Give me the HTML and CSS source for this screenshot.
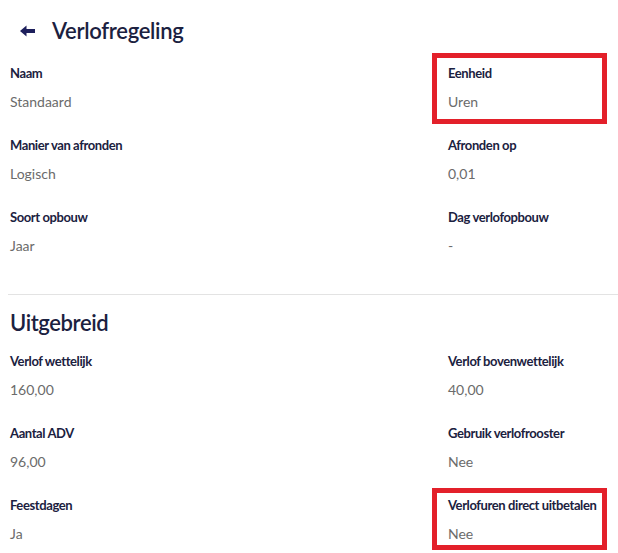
FILE: index.html
```html
<!DOCTYPE html>
<html lang="nl">
<head>
<meta charset="utf-8">
<title>Verlofregeling</title>
<link rel="stylesheet" href="styles.css">
</head>
<body>
<div class="page">
  <header class="header">
    <span class="back">
      <svg width="15" height="12" viewBox="0 0 15 12"><path d="M0 6 L6.5 0.5 L6.5 4 L15 4 L15 8 L6.5 8 L6.5 11.5 Z" fill="#1d1f5c"/></svg>
    </span>
    <h1 class="title">Verlofregeling</h1>
  </header>
  <div class="fields">
    <div class="field"><div class="label">Naam</div><div class="value">Standaard</div></div>
    <div class="field marked"><div class="label">Eenheid</div><div class="value">Uren</div><span class="mark mark-top"></span></div>
    <div class="field"><div class="label">Manier van afronden</div><div class="value">Logisch</div></div>
    <div class="field"><div class="label">Afronden op</div><div class="value">0,01</div></div>
    <div class="field"><div class="label">Soort opbouw</div><div class="value">Jaar</div></div>
    <div class="field"><div class="label">Dag verlofopbouw</div><div class="value">-</div></div>
  </div>
  <hr class="divider">
  <h2 class="section">Uitgebreid</h2>
  <div class="fields">
    <div class="field"><div class="label">Verlof wettelijk</div><div class="value">160,00</div></div>
    <div class="field"><div class="label">Verlof bovenwettelijk</div><div class="value">40,00</div></div>
    <div class="field"><div class="label">Aantal ADV</div><div class="value">96,00</div></div>
    <div class="field"><div class="label">Gebruik verlofrooster</div><div class="value">Nee</div></div>
    <div class="field"><div class="label">Feestdagen</div><div class="value">Ja</div></div>
    <div class="field marked"><div class="label">Verlofuren direct uitbetalen</div><div class="value">Nee</div><span class="mark mark-bottom"></span></div>
  </div>
</div>
</body>
</html>
```

FILE: styles.css
```css
html, body {
  margin: 0;
  padding: 0;
  background: #ffffff;
}
body {
  font-family: "Lato", "Noto Sans", sans-serif;
  color: #1b2140;
  overflow: hidden;
}
.page {
  padding: 0 0 0 10px;
}
.header {
  display: flex;
  align-items: center;
  height: 30px;
  padding-top: 16px;
  margin-bottom: 17px;
}
.back {
  display: flex;
  width: 15px;
  height: 12px;
  margin-left: 10px;
  margin-right: 17px;
}
.title {
  margin: 0;
  font-size: 22px;
  font-weight: 600;
  line-height: 30px;
  letter-spacing: -0.3px;
  color: #1b2140;
}
.fields {
  display: grid;
  grid-template-columns: 438px 1fr;
}
.field {
  position: relative;
  height: 72px;
}
.label {
  font-size: 13px;
  font-weight: 700;
  line-height: 20px;
  letter-spacing: -0.4px;
  color: #1b2140;
}
.value {
  margin-top: 9px;
  font-size: 14px;
  line-height: 20px;
  color: #6b6b6b;
}
.mark {
  position: absolute;
  left: -16px;
  width: 165px;
  border: 5px solid #e3202a;
}
.mark-top {
  top: -10px;
  height: 61px;
}
.mark-bottom {
  top: -7px;
  height: 52px;
}
.divider {
  margin: 15px 0 0 -2px;
  border: 0;
  border-top: 1px solid #e3e3e3;
  height: 0;
}
.section {
  margin: 0;
  padding-top: 13px;
  font-size: 22px;
  font-weight: 600;
  line-height: 30px;
  letter-spacing: -0.4px;
  margin-bottom: 13px;
}
```
